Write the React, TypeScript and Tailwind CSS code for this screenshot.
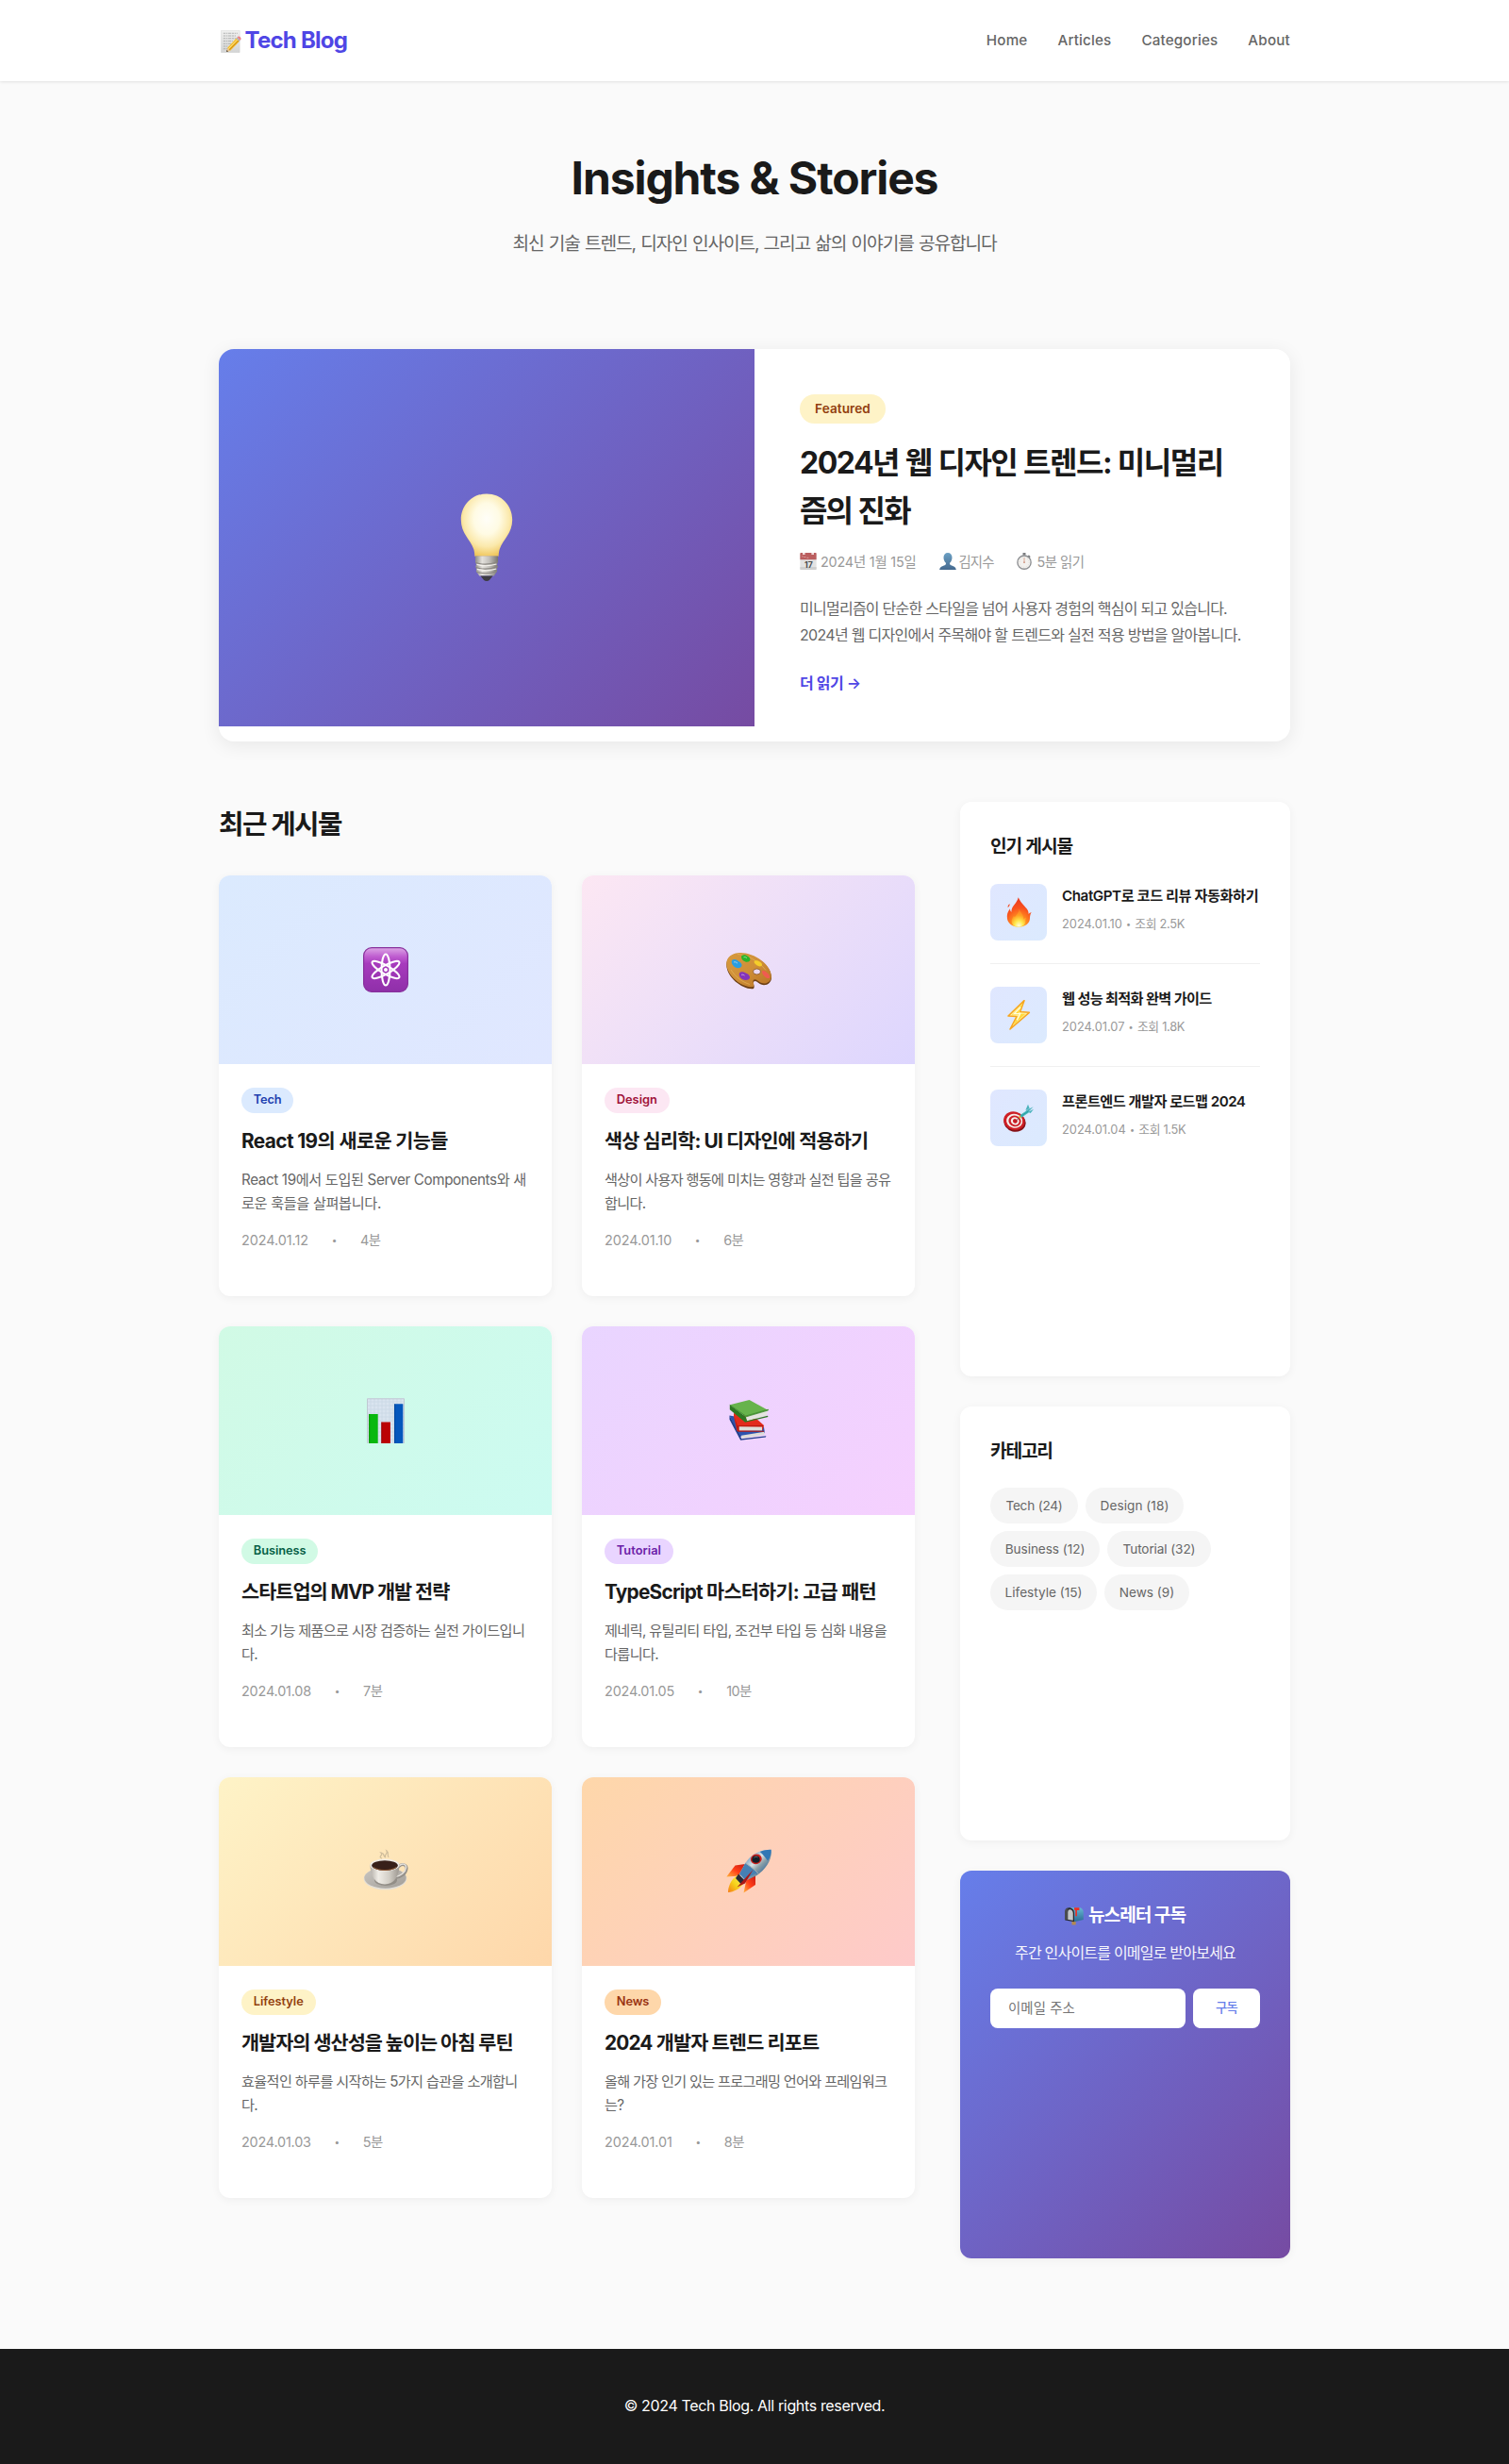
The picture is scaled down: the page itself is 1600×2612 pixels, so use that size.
import React from "react";

type IconProps = { className?: string };

const svgProps = (className?: string) => ({
  viewBox: "0 0 48 48",
  className: `block shrink-0 ${className ?? ""}`,
  "aria-hidden": true,
});

function MemoIcon({ className }: IconProps) {
  return (
    <svg {...svgProps(className)} preserveAspectRatio="none">
      <defs>
        <linearGradient id="memoPaper" x1="0" y1="0" x2="0" y2="1">
          <stop offset="0" stopColor="#f1f1f0" />
          <stop offset="1" stopColor="#d3d4d4" />
        </linearGradient>
        <linearGradient id="memoPencil" x1="0" y1="0" x2="1" y2="1">
          <stop offset="0" stopColor="#ffd94e" />
          <stop offset="1" stopColor="#e39a0b" />
        </linearGradient>
      </defs>
      <rect x="1" y="0.5" width="43" height="47" rx="1" fill="url(#memoPaper)" stroke="#c9caca" strokeWidth="0.8" />
      <g stroke="#9a9c9e" strokeWidth="1.5" strokeDasharray="5 1.5 3 1.5 7 1.5">
        <path d="M6 6.5h33M6 12h30M6 17.500h33M6 23h22M6 28.500h18M6 34h12M6 39.500h10" />
      </g>
      <path d="M15.500 37.500 36 17l7.500 6.500L22 43.500l-7.500 2z" fill="url(#memoPencil)" />
      <path d="M18 39.500 39 19.500" stroke="#fff0a0" strokeWidth="1.500" />
      <path d="M20 41.800 41.500 21.800" stroke="#bf7a08" strokeWidth="1.300" />
      <path d="m15.500 37.500-2 8.500 8.500-2.500z" fill="#eac592" />
      <path d="m14.200 42-1 4.200 4.300-1.200z" fill="#3a3430" />
      <path d="m36 17 2.200-2 7 6.600-1.900 2z" fill="#a8b0ba" />
      <path d="m38.200 15 1.800-1.700c3-2 8.200 2.400 6.800 6l-1.600 2.300z" fill="#ef8087" />
    </svg>
  );
}

function BulbIcon({ className }: IconProps) {
  return (
    <svg viewBox="0 0 56 94" className={`block shrink-0 ${className ?? ""}`} aria-hidden>
      <defs>
        <radialGradient id="bulbGlass" cx="0.5" cy="0.4" r="0.62">
          <stop offset="0" stopColor="#fffef8" />
          <stop offset="0.4" stopColor="#fffbe4" />
          <stop offset="0.72" stopColor="#fbe9ac" />
          <stop offset="1" stopColor="#efc558" />
        </radialGradient>
        <linearGradient id="bulbBase" x1="0" x2="1">
          <stop offset="0" stopColor="#8e8c88" />
          <stop offset="0.3" stopColor="#e4e2dd" />
          <stop offset="0.6" stopColor="#c4c2bd" />
          <stop offset="1" stopColor="#77756f" />
        </linearGradient>
      </defs>
      <path d="M28 .5C12.500.500.800 12.500.800 28c0 14.500 9.700 20.500 13.400 31 .9 2.700 1.200 7.700 1.200 7.700h25.200s.3-5 1.200-7.700C45.500 48.500 55.200 42.500 55.200 28 55.200 12.500 43.500.5 28 .5z" fill="url(#bulbGlass)" />
      <path d="M16 66.500h24v6.300l-1 2.400.8 2.400-1 2.500.3 2.400-3.300 5H20.200l-3.300-5 .3-2.400-1-2.500.8-2.400-1-2.400z" fill="url(#bulbBase)" />
      <path d="M16.300 73.500c7 2.300 16 1.800 23.200-.8M16.500 78.500c7 2.300 16 1.800 23.200-.8M17.200 83.200c7 2.300 15.200 1.800 21.700-.8" fill="none" stroke="#8a8781" strokeWidth="1.100" />
      <path d="M17.500 75.400c7 2 14 1.700 21-.4M17.800 80.400c7 2 14 1.700 20.500-.4" fill="none" stroke="#f6f4ef" strokeWidth="1.200" />
      <path d="M21.500 87.500h13l-3.600 4.400c-1.500 1.400-4.300 1.400-5.800 0z" fill="#3d3c42" />
    </svg>
  );
}

function CalendarIcon({ className }: IconProps) {
  return (
    <svg {...svgProps(className)}>
      <path d="M1 3h46v43a2 2 0 0 1-2 2H3a2 2 0 0 1-2-2z" fill="#e3e3e3" />
      <path d="M1 40h46v6a2 2 0 0 1-2 2H3a2 2 0 0 1-2-2z" fill="#cfcfcf" />
      <path d="M1 2a2 2 0 0 1 2-2h42a2 2 0 0 1 2 2v17H1z" fill="#bb5e5f" />
      <path d="M8 0h7v5H8zM33 0h7v5h-7z" fill="#f0dada" />
      <path d="M6 10.500h4M12 12h5M20 14h5" stroke="#e5b4b4" strokeWidth="2" />
      <text x="25" y="42" textAnchor="middle" fontFamily="Inter" fontSize="23" fontWeight="700" fill="#4b4b4b">
        17
      </text>
    </svg>
  );
}

function PersonIcon({ className }: IconProps) {
  return (
    <svg {...svgProps(className)}>
      <defs>
        <linearGradient id="bust" x1="0" y1="0" x2="0" y2="1">
          <stop offset="0" stopColor="#6ba0c4" />
          <stop offset="1" stopColor="#44698f" />
        </linearGradient>
      </defs>
      <path d="M24 0c-7.500 0-12 5.500-12 13 0 6 2.500 12.500 6.500 15.500.5 3-.5 5.200-3.500 6.500C9 37.500 1.500 38.500.5 48h47c-1-9.500-8.500-10.500-14.500-13-3-1.300-4-3.500-3.500-6.500C33.500 25.500 36 19 36 13 36 5.500 31.500 0 24 0z" fill="url(#bust)" />
    </svg>
  );
}

function StopwatchIcon({ className }: IconProps) {
  return (
    <svg {...svgProps(className)}>
      <path d="M20 0h8v7h-8z" fill="#7b7d80" />
      <path d="m37 6 5 5-4 3-4-4z" fill="#76787b" />
      <circle cx="24" cy="27" r="19" fill="#f3f1ee" stroke="#8c8e91" strokeWidth="3.600" />
      <circle cx="24" cy="27" r="13.500" fill="none" stroke="#a7a7a7" strokeWidth="1.500" strokeDasharray="1.300 5.760" />
      <path d="M24 27V14" stroke="#d38f75" strokeWidth="2" />
      <circle cx="24" cy="27" r="2.500" fill="#cf9a86" />
    </svg>
  );
}

function AtomIcon({ className }: IconProps) {
  return (
    <svg {...svgProps(className)}>
      <defs>
        <linearGradient id="atomTile" x1="0" y1="0" x2="0" y2="1">
          <stop offset="0" stopColor="#dca6e6" />
          <stop offset="0.2" stopColor="#bf5dd0" />
          <stop offset="0.36" stopColor="#a73bbd" />
          <stop offset="1" stopColor="#8f2fa9" />
        </linearGradient>
      </defs>
      <rect x="0.600" y="0.600" width="46.800" height="46.800" rx="8.500" fill="url(#atomTile)" stroke="#87309c" strokeWidth="1.200" />
      <g fill="none" stroke="#fff" strokeWidth="2.100">
        <ellipse cx="24" cy="24" rx="4.500" ry="16.500" />
        <ellipse cx="24" cy="24" rx="4.500" ry="16.500" transform="rotate(60 24 24)" />
        <ellipse cx="24" cy="24" rx="4.500" ry="16.500" transform="rotate(-60 24 24)" />
      </g>
      <circle cx="24" cy="24" r="2" fill="#fff" />
    </svg>
  );
}

function PaletteIcon({ className }: IconProps) {
  return (
    <svg {...svgProps(className)}>
      <defs>
        <linearGradient id="palWood" x1="0" y1="0" x2="1" y2="1">
          <stop offset="0" stopColor="#d79a3e" />
          <stop offset="0.5" stopColor="#cf8f38" />
          <stop offset="1" stopColor="#b87325" />
        </linearGradient>
      </defs>
      <path d="M.3 18C.3 10.500 6.500 6 15 6c15 0 33 12.500 33 25.500 0 4.500-3.500 8-8 8-3.500 0-5.300-2-7.800-3.700-2.200-1.500-4.200.4-3 3.200.8 2 .8 4.500-2 4.500C16.500 43.500.3 31 .3 18z" fill="#6d3f14" transform="translate(0 .8)" />
      <path d="M.3 17.500C.3 10.500 6.500 6 15 6c15 0 32.800 12.500 32.800 25.200 0 4.300-3.500 7.300-7.800 7.300-3.500 0-5.300-2-7.800-3.700-2.200-1.500-4.600.2-3.400 3 .8 2 .8 4.500-1.900 4.500C16.500 42.300.3 30.500.3 17.500z" fill="url(#palWood)" />
      <path d="M5 24c5 8 12 13 20 15.500M12 7.500c10 .5 22 7 30 17" stroke="#e8b65f" strokeWidth="0.800" fill="none" opacity="0.800" />
      <ellipse cx="32.500" cy="26" rx="4" ry="3" fill="#ead9f3" stroke="#8a541e" strokeWidth="0.800" />
      <path d="M6 14c2.500-2 5.500-.5 7 1 2 1 4 2.500 3.500 5-1.500 3-6 2.500-8 .8C6.500 19 5 16.500 6 14z" fill="#2b9ee0" />
      <path d="M16.500 9c2-1.500 5-.5 6.500.8 2 1 3 2.800 2 4.700-2 2-5 1.200-7-.3-1.500-1.200-2.500-3.500-1.500-5.200z" fill="#28b52a" />
      <path d="M30 14.500c2-.8 4.500 0 6 1.300 1.800 1.200 2.700 2.800 1.500 4.200-2 1.200-4.500-.3-6-1.500-1.500-1.200-2.500-2.700-1.500-4z" fill="#f5ce2a" />
      <path d="M38.500 25c2-.3 4.500 1.700 6 3.300 1.500 1.800 2.300 3.700 1 4.700-2 .5-4-.8-5.300-2.500-1.700-1.800-3-4.500-1.700-5.500z" fill="#ef5c50" />
      <path d="M14 27.500c1.500-2 5-1.300 7 .2 2.500.8 4.500 2.800 4 5-1 2.500-5 2.800-7.500 1.500-2.500-1-4.500-4-3.500-6.700z" fill="#8434bb" />
      <path d="M8 16c1.500-.8 3 .3 4 1.200M18.500 10.800c1.200-.5 2.500 0 3.500.8M16 29.500c1-.6 2.500-.2 3.500.6" stroke="#fff" strokeWidth="1" fill="none" opacity="0.500" />
    </svg>
  );
}

function ChartIcon({ className }: IconProps) {
  return (
    <svg {...svgProps(className)}>
      <rect x="4" y="0.300" width="40" height="47.700" fill="#d9e4ef" />
      <path d="M8 1v47M12 1v47M16 1v47M20 1v47M24 1v47M28 1v47M32 1v47M36 1v47M40 1v47M4 4h40M4 8h40M4 12h40M4 16h40M4 20h40M4 24h40M4 28h40M4 32h40M4 36h40M4 40h40M4 44h40" stroke="#c3d0de" strokeWidth="0.500" />
      <path d="M4.500 48V.8h39V48" fill="none" stroke="#bfc9d2" strokeWidth="1" />
      <path d="M6 17h9.700v31H6z" fill="#08b80e" />
      <path d="M19.200 25.500h9.700V48h-9.700z" fill="#bb0205" />
      <path d="M33 6.300h9.300V48H33z" fill="#0457bd" />
      <path d="M6 17h1.200v31H6zM19.200 25.500h1.200V48h-1.200zM33 6.300h1.200V48H33z" fill="#000" opacity="0.140" />
    </svg>
  );
}

function BooksIcon({ className }: IconProps) {
  return (
    <svg {...svgProps(className)}>
      <path d="M3.500 18.500 14 41l27-4-1-6-12-8z" fill="#2d53ae" />
      <path d="m16 39.800 24.500-4v3.200l-24 3.800z" fill="#dcdcd8" />
      <path d="M3.500 18.500v4.300L15.200 44.800 42 41.500l.3-1.300-26 3z" fill="#213f8b" />
      <path d="M8 16v3.500L11.500 35l27-1 1.500-5-9-8z" fill="#e22b1c" />
      <path d="m12.500 30 25.500.4v4.200H13.300z" fill="#deded9" />
      <path d="m12 29.300 26.800-.3 1.200 1.300H13.700v4.500H40v1H12.300L8.500 20z" fill="#b71911" />
      <path d="M3.800 7.300 24.500 2 44.500 13l-23.800 7z" fill="#67b34c" />
      <path d="m20.700 20 23.300-6.400-1.200 4.900L22 24.500z" fill="#e4e4df" />
      <path d="M3.800 7.300v4.900l16.300 13.600L44.500 20l-.6-1.300L22 24.200 20.700 20z" fill="#2d7822" />
      <path d="M20.500 20 44.500 13v-.8L20.700 19 3.800 7.300" fill="none" stroke="#3e8a2d" strokeWidth="0.800" />
    </svg>
  );
}

function CoffeeIcon({ className }: IconProps) {
  return (
    <svg {...svgProps(className)}>
      <defs>
        <linearGradient id="cupBody" x1="0" x2="1">
          <stop offset="0" stopColor="#b4afa8" />
          <stop offset="0.280" stopColor="#f0ede7" />
          <stop offset="0.650" stopColor="#d2cec6" />
          <stop offset="1" stopColor="#9b968f" />
        </linearGradient>
        <linearGradient id="saucer" x1="0" y1="0" x2="1" y2="1">
          <stop offset="0" stopColor="#c9c6c1" />
          <stop offset="1" stopColor="#a29e98" />
        </linearGradient>
      </defs>
      <ellipse cx="23.500" cy="31.500" rx="22.800" ry="11.800" fill="#e3dfd7" />
      <ellipse cx="23.500" cy="30.700" rx="22.200" ry="11" fill="url(#saucer)" />
      <ellipse cx="24" cy="33" rx="12" ry="6" fill="#837e77" opacity="0.650" />
      <path d="M37.500 19c4-4.500 9-2 8.500 2-.5 5-6 9.500-12 9.500" fill="none" stroke="#95918b" strokeWidth="3" />
      <path d="M37.500 18.500c4-4.500 8.500-2.300 8 1.500-.5 4.500-6 9-11.500 9.500" fill="none" stroke="#e6e2dc" strokeWidth="1.500" />
      <path d="M7.500 16.500C7.500 29 13.500 37.500 23 37.500S38.500 29 38.500 16.500z" fill="url(#cupBody)" />
      <ellipse cx="23" cy="17" rx="15.500" ry="6.500" fill="#eeeae4" />
      <ellipse cx="23" cy="17.500" rx="13.800" ry="5.300" fill="#38201a" />
      <path d="M11 19.500c6 4 18 4 24 0" fill="none" stroke="#8f5a36" strokeWidth="1" />
      <path d="M20 10c-5-2 2-3-1-6 5 1 1 4 5 5M24 9c-3-3 3-3 1-7 3 2 0 4 2 7" fill="none" stroke="#a79a83" strokeWidth="1.200" opacity="0.550" />
    </svg>
  );
}

function RocketIcon({ className }: IconProps) {
  return (
    <svg {...svgProps(className)}>
      <defs>
        <linearGradient id="rktBody" x1="0.200" y1="0.200" x2="0.800" y2="0.800">
          <stop offset="0" stopColor="#5c91bc" />
          <stop offset="0.400" stopColor="#d9e2e5" />
          <stop offset="0.620" stopColor="#8b9fa7" />
          <stop offset="1" stopColor="#276298" />
        </linearGradient>
        <linearGradient id="rktFin" x1="1" y1="0" x2="0" y2="1">
          <stop offset="0" stopColor="#c71a13" />
          <stop offset="0.500" stopColor="#ff3d17" />
          <stop offset="1" stopColor="#ffb43c" />
        </linearGradient>
        <linearGradient id="rktFlame" x1="1" y1="0" x2="0" y2="1">
          <stop offset="0" stopColor="#fff26b" />
          <stop offset="0.550" stopColor="#f6d31b" />
          <stop offset="1" stopColor="#f67b14" />
        </linearGradient>
      </defs>
      <path d="M20 16 9.500 17.500.3 29.500l14-1z" fill="url(#rktFin)" />
      <path d="M31 27.500V38L18.500 46.500l2.800-13z" fill="url(#rktFin)" />
      <path d="M12 27.500C4 33 2 41 2 46c6-.5 12.500-3.500 17-10z" fill="url(#rktFlame)" />
      <path d="M14 26.500 20.300 15C26 6 36 .3 47.700.8 49 11 42 21.500 32.500 28L19 34.500z" fill="url(#rktBody)" />
      <path d="M47.700.8c-4-.2-8.300.5-12 2.200 3 2.500 6 6 8.300 9.500C47 9 48 5 47.700.8z" fill="#3177b5" />
      <path d="M20.300 15 14 26.500l5.500 5.500 14.500-7c-4-3-9.500-6.500-13.700-10z" fill="#4680b3" />
      <path d="M20.300 15c4.500 2.500 10 7 13.700 11" fill="none" stroke="#a5afb0" strokeWidth="1" />
      <path d="m13 26.500 7.500 8-5 2.500-5.500-6z" fill="#272a38" />
      <path d="M28.500 22 11.500 40.500 20 36.500z" fill="#ac1715" />
      <ellipse cx="31.800" cy="10.800" rx="6" ry="5.300" transform="rotate(-20 31.800 10.800)" fill="#cb201d" />
      <ellipse cx="31.500" cy="11" rx="4.200" ry="3.800" fill="#131d27" />
      <path d="M29.500 9.500c1-1.500 3-1.500 4-.5" stroke="#80939c" strokeWidth="0.700" fill="none" />
    </svg>
  );
}

function FireIcon({ className }: IconProps) {
  return (
    <svg {...svgProps(className)}>
      <defs>
        <radialGradient id="fireOuter" cx="0.500" cy="0.950" r="0.850">
          <stop offset="0" stopColor="#ffdc3b" />
          <stop offset="0.350" stopColor="#ff8f21" />
          <stop offset="0.700" stopColor="#f9531d" />
          <stop offset="1" stopColor="#ee3f20" />
        </radialGradient>
        <radialGradient id="fireInner" cx="0.500" cy="0.950" r="0.850">
          <stop offset="0" stopColor="#fffde0" />
          <stop offset="0.350" stopColor="#ffe94d" />
          <stop offset="0.700" stopColor="#ffa323" />
          <stop offset="1" stopColor="#ff7f22" />
        </radialGradient>
      </defs>
      <path d="M23.500.5c-1 4.500-3 8-6.500 12-3 3.500-4.500 7-4.500 11.500-1.500-1.500-2-3.500-2-5.500-4 5-5.500 10-4.500 16 1.500 8 8.500 13 18 13 11 0 18-6 18-14.500 0-3 1-6.500 2.500-9-2 .8-3.500 1.500-4.500 3 0-6-3.500-9-7-13C29.500 10.500 26 5.500 23.500.5z" fill="url(#fireOuter)" />
      <path d="M10 11c-2 1-3.500 3-3 5.500 2-1.500 3-3 3-5.500z" fill="#f34a20" />
      <path d="M25 19c-.5 5-3.500 8-6 11.500-1 1.500-2 1-2.500-.5-3 4-4.500 8-3 11.500 1.500 4 5.500 5.800 10.500 5.800 6.500 0 11-3.500 11-9 0-3 .5-4.300 1-5.800-2 .7-3 1.500-4 3 .5-7-5-11-7-16.500z" fill="url(#fireInner)" />
    </svg>
  );
}

function BoltIcon({ className }: IconProps) {
  return (
    <svg {...svgProps(className)}>
      <path d="M33 1 7.500 25.500l13.500.8L10.500 46.500 41 20l-14.500-1.300z" fill="#fff3a1" stroke="#f7a51e" strokeWidth="2.300" strokeLinejoin="round" />
      <path d="M31 5 13 23.500h11L15 40.500l20-18.300H23.500z" fill="#ffd93e" />
      <path d="M27 11.500 17 22h9.500l-5 10" stroke="#fffce0" strokeWidth="2" fill="none" />
    </svg>
  );
}

function DartIcon({ className }: IconProps) {
  return (
    <svg {...svgProps(className)}>
      <g transform="rotate(14 18 29)">
        <ellipse cx="18.500" cy="31" rx="17.500" ry="15" fill="#841016" />
        <ellipse cx="17" cy="29" rx="17" ry="14.500" fill="#ce1f25" />
        <ellipse cx="17.500" cy="29" rx="13" ry="11.200" fill="#f5efea" />
        <ellipse cx="18" cy="29" rx="10" ry="8.700" fill="#cc2027" />
        <ellipse cx="18.300" cy="29" rx="6.700" ry="6" fill="#f6f1ed" />
        <ellipse cx="18.600" cy="29" rx="3.700" ry="3.400" fill="#c81c22" />
      </g>
      <path d="m19.500 28.500 7-5.500" stroke="#7b4545" strokeWidth="1.300" />
      <path d="m24 22.500 3-2.500 2 2.500-3.500 2.500z" fill="#e4b32f" />
      <path d="m26.500 19.500 11.500-8 2.500 4-12 8z" fill="#42b9bd" />
      <path d="m35 12 4-9.500 2.500 6.500zM39 14.500l9-4.500-5 6.500zM35.500 12.500l12-6-8 8z" fill="#4bb3bc" />
      <path d="m27.500 21.500 12-8" stroke="#1f7d86" strokeWidth="0.800" />
    </svg>
  );
}

function MailboxIcon({ className }: IconProps) {
  return (
    <svg {...svgProps(className)}>
      <defs>
        <linearGradient id="boxSide" x1="0" y1="0" x2="0" y2="1">
          <stop offset="0" stopColor="#67b9d4" />
          <stop offset="1" stopColor="#2b6b94" />
        </linearGradient>
      </defs>
      <path d="M18 36h10v12H18z" fill="#b48a4f" />
      <path d="M11 4h25c7 0 11.500 5 11.500 12v18.500L24 40 11 34z" fill="url(#boxSide)" />
      <path d="M11 4c8 0 13 6 13 14v22L1 36V17C1 9 4 4 11 4z" fill="#27292f" />
      <path d="M13 9c5 0 8 4 8 10v17.500L7 34V19c0-6 1.500-10 6-10z" fill="#c4c8c9" />
      <path d="M0 17C0 9 3 5 8 5v29l-8 1.500z" fill="#494c50" />
      <path d="M24 4h13v7h-6v15h-4V10h-3z" fill="#ee2c22" />
    </svg>
  );
}

type Post = {
  tag: string;
  tagStyle: string;
  cover: string;
  icon: React.ReactNode;
  title: string;
  titleTracking: string;
  body: string[];
  bodyTracking: string;
  date: string;
  dateTracking: string;
  minutes: string;
};

const posts: Post[] = [
  {
    tag: "Tech",
    tagStyle: "bg-[#dbeafe] text-[#1e40af] tracking-[-0.15px]",
    cover: "bg-[linear-gradient(135deg,#dbeafe,#e0e7ff)]",
    icon: <AtomIcon className="size-12" />,
    title: "React 19의 새로운 기능들",
    titleTracking: "tracking-[-0.6px]",
    body: ["React 19에서 도입된 Server Components와 새", "로운 훅들을 살펴봅니다."],
    bodyTracking: "tracking-[-0.36px]",
    date: "2024.01.12",
    dateTracking: "tracking-[-0.05px]",
    minutes: "4분",
  },
  {
    tag: "Design",
    tagStyle: "bg-[#fce7f3] text-[#9f1239]",
    cover: "bg-[linear-gradient(135deg,#fce7f3,#ddd6fe)]",
    icon: <PaletteIcon className="size-12" />,
    title: "색상 심리학: UI 디자인에 적용하기",
    titleTracking: "tracking-[-0.86px]",
    body: ["색상이 사용자 행동에 미치는 영향과 실전 팁을 공유", "합니다."],
    bodyTracking: "tracking-[-0.72px]",
    date: "2024.01.10",
    dateTracking: "tracking-[-0.06px]",
    minutes: "6분",
  },
  {
    tag: "Business",
    tagStyle: "bg-[#d1fae5] text-[#065f46] tracking-[-0.04px]",
    cover: "bg-[linear-gradient(135deg,#d1fae5,#ccfbf1)]",
    icon: <ChartIcon className="size-12" />,
    title: "스타트업의 MVP 개발 전략",
    titleTracking: "tracking-[-1px]",
    body: ["최소 기능 제품으로 시장 검증하는 실전 가이드입니", "다."],
    bodyTracking: "tracking-[-0.7px]",
    date: "2024.01.08",
    dateTracking: "tracking-[-0.17px]",
    minutes: "7분",
  },
  {
    tag: "Tutorial",
    tagStyle: "bg-[#e9d5ff] text-[#6b21a8] tracking-[0.05px]",
    cover: "bg-[linear-gradient(135deg,#e9d5ff,#f5d0fe)]",
    icon: <BooksIcon className="size-12" />,
    title: "TypeScript 마스터하기: 고급 패턴",
    titleTracking: "tracking-[-0.76px]",
    body: ["제네릭, 유틸리티 타입, 조건부 타입 등 심화 내용을", "다룹니다."],
    bodyTracking: "tracking-[-0.66px]",
    date: "2024.01.05",
    dateTracking: "tracking-[-0.14px]",
    minutes: "10분",
  },
  {
    tag: "Lifestyle",
    tagStyle: "bg-[#fef3c7] text-[#92400e] tracking-[-0.02px]",
    cover: "bg-[linear-gradient(135deg,#fef3c7,#fed7aa)]",
    icon: <CoffeeIcon className="size-12" />,
    title: "개발자의 생산성을 높이는 아침 루틴",
    titleTracking: "tracking-[-1.01px]",
    body: ["효율적인 하루를 시작하는 5가지 습관을 소개합니", "다."],
    bodyTracking: "tracking-[-0.67px]",
    date: "2024.01.03",
    dateTracking: "tracking-[-0.19px]",
    minutes: "5분",
  },
  {
    tag: "News",
    tagStyle: "bg-[#fed7aa] text-[#9a3412] tracking-[-0.1px]",
    cover: "bg-[linear-gradient(135deg,#fed7aa,#fecaca)]",
    icon: <RocketIcon className="size-12" />,
    title: "2024 개발자 트렌드 리포트",
    titleTracking: "tracking-[-0.85px]",
    body: ["올해 가장 인기 있는 프로그래밍 언어와 프레임워크", "는?"],
    bodyTracking: "tracking-[-0.73px]",
    date: "2024.01.01",
    dateTracking: "tracking-[-0.09px]",
    minutes: "8분",
  },
];

const popular = [
  { icon: <FireIcon className="size-8" />, title: "ChatGPT로 코드 리뷰 자동화하기", tracking: "tracking-[-0.44px]", date: "2024.01.10", views: "조회 2.5K" },
  { icon: <BoltIcon className="size-8" />, title: "웹 성능 최적화 완벽 가이드", tracking: "tracking-[-0.7px]", date: "2024.01.07", views: "조회 1.8K" },
  { icon: <DartIcon className="size-8" />, title: "프론트엔드 개발자 로드맵 2024", tracking: "tracking-[-0.53px]", date: "2024.01.04", views: "조회 1.5K" },
];

const categories = [
  { label: "Tech (24)", style: "w-[93px] tracking-[-0.2px]" },
  { label: "Design (18)", style: "w-[104px] tracking-[0.05px]" },
  { label: "Business (12)", style: "w-[116px] tracking-[-0.05px]" },
  { label: "Tutorial (32)", style: "w-[110px] tracking-[-0.1px]" },
  { label: "Lifestyle (15)", style: "w-[113px]" },
  { label: "News (9)", style: "w-[90px]" },
];

function PostCard({ post }: { post: Post }) {
  return (
    <article className="h-[446px] overflow-hidden rounded-xl bg-white shadow-[0_2px_10px_rgba(0,0,0,0.05)]">
      <div className={`flex h-[200px] items-center justify-center ${post.cover}`}>{post.icon}</div>
      <div className="px-6 pt-[25px]">
        <span className={`block w-fit rounded-full px-[12.8px] py-[3.2px] text-[12.8px] leading-[20.5px] font-semibold ${post.tagStyle}`}>
          {post.tag}
        </span>
        <h3 className={`mt-[13.3px] text-[20.8px] leading-[33.3px] font-bold whitespace-nowrap text-[#1a1a1a] ${post.titleTracking}`}>
          {post.title}
        </h3>
        <p className={`mt-[12.9px] text-[15.2px] leading-[24.3px] whitespace-nowrap text-[#666] ${post.bodyTracking}`}>
          {post.body[0]}
          <br />
          {post.body[1]}
        </p>
        <div className="mt-[15.2px] flex gap-6 text-[14.4px] leading-[23px] text-[#999]">
          <span className={post.dateTracking}>{post.date}</span>
          <span className="w-[7px] text-center text-[10px]">•</span>
          <span className="tracking-[-0.5px]">{post.minutes}</span>
        </div>
      </div>
    </article>
  );
}

export default function App() {
  return (
    <div className="flex h-[2612px] flex-col overflow-hidden bg-[#fafafa] font-['Inter','Noto_Sans_CJK_KR',sans-serif] text-[16px] leading-[25.6px] text-[#1a1a1a]">
      <header className="relative bg-white shadow-[0_1px_3px_rgba(0,0,0,0.1)]">
        <div className="mx-auto flex h-[86.4px] w-[1136px] items-center justify-between">
          <div className="flex items-center pt-px text-[24px] leading-[38.4px] font-bold text-[#4f46e5]">
            <MemoIcon className="ml-[1.500px] h-6 w-[22px]" />
            <span className="ml-1 tracking-[-0.75px]">Tech Blog</span>
          </div>
          <nav className="flex gap-8 text-[15.2px] leading-[24.3px] font-medium text-[#666]">
            <a className="tracking-[0.2px]">Home</a>
            <a className="tracking-[0.16px]">Articles</a>
            <a className="tracking-[0.17px]">Categories</a>
            <a className="tracking-[0.2px]">About</a>
          </nav>
        </div>
      </header>

      <section className="pt-[65px] pb-24 text-center">
        <h1 className="text-[48px] leading-[76.8px] font-bold tracking-[-1.12px]">Insights &amp; Stories</h1>
        <p className="mt-[15px] text-[19.2px] leading-[30.7px] tracking-[-1.15px] text-[#666] [word-spacing:1px]">
          최신 기술 트렌드, 디자인 인사이트, 그리고 삶의 이야기를 공유합니다
        </p>
      </section>

      <main className="mx-auto w-[1136px]">
        <section className="grid grid-cols-2 overflow-hidden rounded-2xl bg-white shadow-[0_4px_20px_rgba(0,0,0,0.08)]">
          <div className="flex h-[400px] items-center justify-center bg-[linear-gradient(135deg,#667eea,#764ba2)]">
            <BulbIcon className="mt-px h-[94px] w-[56px]" />
          </div>
          <div className="p-12">
            <span className="block w-fit rounded-full bg-[#fef3c7] px-4 py-[4.8px] text-[13.6px] leading-[21.8px] font-semibold tracking-[0.08px] text-[#92400e]">
              Featured
            </span>
            <h2 className="mt-4 text-[32px] leading-[51.2px] font-bold whitespace-nowrap tracking-[-1.5px] [word-spacing:0.7px]">
              2024년 웹 디자인 트렌드: 미니멀리
              <br />
              <span className="tracking-[-1.85px]">즘의 진화</span>
            </h2>
            <div className="mt-4 flex gap-6 text-[14.4px] leading-[23px] whitespace-nowrap text-[#999]">
              <span className="flex items-center">
                <CalendarIcon className="size-[18px]" />
                <span className="ml-1 tracking-[-0.2px]">2024년 1월 15일</span>
              </span>
              <span className="flex items-center">
                <PersonIcon className="size-[18px]" />
                <span className="ml-[3px] tracking-[-0.95px]">김지수</span>
              </span>
              <span className="flex items-center">
                <StopwatchIcon className="size-[18px]" />
                <span className="ml-1 tracking-[-0.48px]">5분 읽기</span>
              </span>
            </div>
            <p className="mt-6 leading-[28.8px] whitespace-nowrap text-[#666]">
              <span className="tracking-[-0.75px]">미니멀리즘이 단순한 스타일을 넘어 사용자 경험의 핵심이 되고 있습니다.</span>
              <br />
              <span className="tracking-[-0.7px]">2024년 웹 디자인에서 주목해야 할 트렌드와 실전 적용 방법을 알아봅니다.</span>
            </p>
            <a className="mt-6 block font-semibold tracking-[-0.5px] text-[#4f46e5]">더 읽기 →</a>
          </div>
        </section>

        <div className="mt-16 grid h-[1544.5px] grid-cols-[738px_350px] gap-12">
          <section>
            <h2 className="pt-px text-[28.8px] leading-[46.1px] font-bold tracking-[-1.56px]">최근 게시물</h2>
            <div className="mt-[31px] grid grid-cols-2 gap-8">
              {posts.map((post) => (
                <PostCard key={post.tag} post={post} />
              ))}
            </div>
          </section>

          <aside className="flex flex-col gap-8">
            <section className="h-[609.200px] rounded-xl bg-white p-8 shadow-[0_2px_10px_rgba(0,0,0,0.05)]">
              <h3 className="text-[19.2px] leading-[30.7px] font-bold tracking-[-1.1px] [word-spacing:0.8px]">인기 게시물</h3>
              <ul className="mt-6 flex flex-col gap-6">
                {popular.map((item) => (
                  <li key={item.title} className="flex gap-4 border-b border-[#f0f0f0] pb-6 last:border-b-0">
                    <div className="flex size-[60px] shrink-0 items-center justify-center rounded-lg bg-[linear-gradient(135deg,#e0e7ff,#dbeafe)]">
                      {item.icon}
                    </div>
                    <div className="whitespace-nowrap">
                      <h4 className={`text-[15.2px] leading-[26px] font-semibold ${item.tracking}`}>{item.title}</h4>
                      <p className="mt-[7.600px] flex text-[12.8px] leading-[20.5px] text-[#999]">
                        <span>{item.date}</span>
                        <span className="w-[13.500px] text-center text-[9px]">•</span>
                        <span className="tracking-[-0.3px]">{item.views}</span>
                      </p>
                    </div>
                  </li>
                ))}
              </ul>
            </section>

            <section className="h-[459.800px] rounded-xl bg-white p-8 shadow-[0_2px_10px_rgba(0,0,0,0.05)]">
              <h3 className="text-[19.2px] leading-[30.7px] font-bold tracking-[-1.2px]">카테고리</h3>
              <div className="mt-[23.300px] flex flex-wrap gap-2">
                {categories.map((category) => (
                  <span
                    key={category.label}
                    className={`rounded-full bg-[#f5f5f5] pt-[7.500px] pb-[8.500px] text-center text-[13.6px] leading-[22px] whitespace-nowrap text-[#666] ${category.style}`}
                  >
                    {category.label}
                  </span>
                ))}
              </div>
            </section>

            <section className="h-[411px] rounded-xl bg-[linear-gradient(135deg,#667eea,#764ba2)] p-8 text-white shadow-[0_2px_10px_rgba(0,0,0,0.05)]">
              <h3 className="flex items-center justify-center text-[19.2px] leading-[30.7px] font-bold">
                <MailboxIcon className="h-[21px] w-5" />
                <span className="ml-[5px] tracking-[-1.05px]">뉴스레터 구독</span>
              </h3>
              <p className="mt-3 text-center tracking-[-0.79px] opacity-95">주간 인사이트를 이메일로 받아보세요</p>
              <div className="mt-[24.800px] flex gap-2">
                <input
                  type="text"
                  placeholder="이메일 주소"
                  className="h-[42px] w-[207px] rounded-lg bg-white px-[19px] text-[14.4px] tracking-[0.1px] outline-none placeholder:text-[#757575]"
                />
                <button className="h-[42px] w-[71px] rounded-lg bg-white text-[13.3px] font-medium tracking-[-0.8px] text-[#667eea]">구독</button>
              </div>
            </section>
          </aside>
        </div>
      </main>

      <footer className="mt-[95.700px] flex-1 bg-[#1a1a1a] pt-[47.500px] text-center tracking-[-0.35px] text-white">
        © 2024 Tech Blog. All rights reserved.
      </footer>
    </div>
  );
}
